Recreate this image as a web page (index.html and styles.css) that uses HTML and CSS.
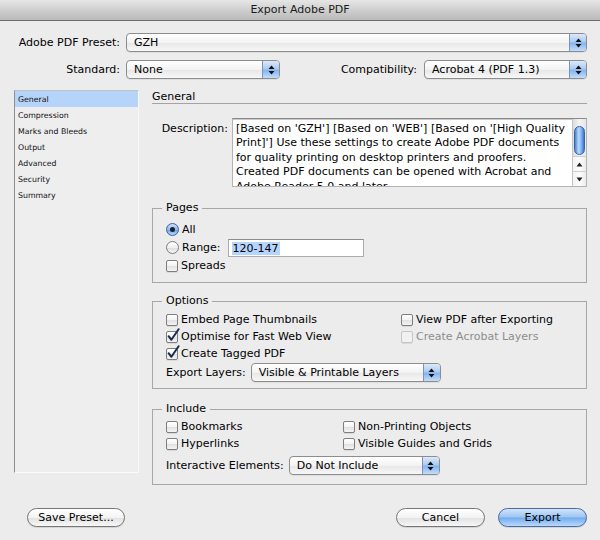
FILE: index.html
```html
<!DOCTYPE html>
<html>
<head>
<meta charset="utf-8">
<title>Export Adobe PDF</title>
<link rel="stylesheet" href="styles.css">
</head>
<body>
<div class="window">
  <div class="titlebar">Export Adobe PDF</div>

  <div class="top">
    <div class="row">
      <span class="lbl">Adobe PDF Preset:</span>
      <div class="popup w-preset"><span class="val">GZH</span><span class="cap"><svg width="9" height="12" viewBox="0 0 9 12"><polygon points="1.5,5 4.5,1.5 7.5,5" fill="#111"/><polygon points="1.5,7 4.5,10.5 7.5,7" fill="#111"/></svg></span></div>
    </div>
    <div class="row row2">
      <span class="lbl">Standard:</span>
      <div class="popup w-std"><span class="val">None</span><span class="cap"><svg width="9" height="12" viewBox="0 0 9 12"><polygon points="1.5,5 4.5,1.5 7.5,5" fill="#111"/><polygon points="1.5,7 4.5,10.5 7.5,7" fill="#111"/></svg></span></div>
      <span class="lbl-compat">Compatibility:</span>
      <div class="popup w-compat"><span class="val">Acrobat 4 (PDF 1.3)</span><span class="cap"><svg width="9" height="12" viewBox="0 0 9 12"><polygon points="1.5,5 4.5,1.5 7.5,5" fill="#111"/><polygon points="1.5,7 4.5,10.5 7.5,7" fill="#111"/></svg></span></div>
    </div>
  </div>

  <div class="main">
    <ul class="nav">
      <li class="sel">General</li>
      <li>Compression</li>
      <li>Marks and Bleeds</li>
      <li>Output</li>
      <li>Advanced</li>
      <li>Security</li>
      <li>Summary</li>
    </ul>

    <div class="panel">
      <div class="phead">General</div>

      <div class="desc-row">
        <span class="desc-lbl">Description:</span>
        <div class="desc-box">
          <div class="desc-text">[Based on 'GZH'] [Based on 'WEB'] [Based on '[High Quality<br>Print]'] Use these settings to create Adobe PDF documents<br>for quality printing on desktop printers and proofers.<br>Created PDF documents can be opened with Acrobat and<br>Adobe Reader 5.0 and later.</div>
          <div class="scroll">
            <div class="thumb"></div>
            <div class="track"></div>
            <div class="arrow"><svg width="7" height="5" viewBox="0 0 7 5"><polygon points="0.5,4.5 3.5,0.5 6.5,4.5" fill="#222"/></svg></div>
            <div class="arrow arrow-down"><svg width="7" height="5" viewBox="0 0 7 5"><polygon points="0.5,0.5 3.5,4.5 6.5,0.5" fill="#222"/></svg></div>
          </div>
        </div>
      </div>

      <fieldset class="grp pages">
        <legend>Pages</legend>
        <div class="line"><span class="radio on"><span class="dot"></span></span><span>All</span></div>
        <div class="line range-line"><span class="radio"></span><span>Range:</span><span class="field"><span class="hl">120-147</span></span></div>
        <div class="line"><span class="box"></span><span>Spreads</span></div>
      </fieldset>

      <fieldset class="grp options">
        <legend>Options</legend>
        <div class="cols cols-opt">
          <div class="line"><span class="box"></span><span>Embed Page Thumbnails</span></div>
          <div class="line"><span class="box"></span><span>View PDF after Exporting</span></div>
          <div class="line"><span class="box"><svg class="tick" width="14" height="15" viewBox="0 0 14 15"><path d="M2.6 8.2 L5.4 11.8 L12.6 1.2" fill="none" stroke="#1c2b4e" stroke-width="2" stroke-linecap="round" stroke-linejoin="round"/></svg></span><span>Optimise for Fast Web View</span></div>
          <div class="line dis"><span class="box"></span><span>Create Acrobat Layers</span></div>
          <div class="line"><span class="box"><svg class="tick" width="14" height="15" viewBox="0 0 14 15"><path d="M2.6 8.2 L5.4 11.8 L12.6 1.2" fill="none" stroke="#1c2b4e" stroke-width="2" stroke-linecap="round" stroke-linejoin="round"/></svg></span><span>Create Tagged PDF</span></div>
        </div>
        <div class="sel-line">
          <span>Export Layers:</span>
          <div class="popup w-layers"><span class="val">Visible &amp; Printable Layers</span><span class="cap"><svg width="9" height="12" viewBox="0 0 9 12"><polygon points="1.5,5 4.5,1.5 7.5,5" fill="#111"/><polygon points="1.5,7 4.5,10.5 7.5,7" fill="#111"/></svg></span></div>
        </div>
      </fieldset>

      <fieldset class="grp include">
        <legend>Include</legend>
        <div class="cols cols-inc">
          <div class="line"><span class="box"></span><span>Bookmarks</span></div>
          <div class="line"><span class="box"></span><span>Non-Printing Objects</span></div>
          <div class="line"><span class="box"></span><span>Hyperlinks</span></div>
          <div class="line"><span class="box"></span><span>Visible Guides and Grids</span></div>
        </div>
        <div class="sel-line sel-inc">
          <span>Interactive Elements:</span>
          <div class="popup w-inter"><span class="val">Do Not Include</span><span class="cap"><svg width="9" height="12" viewBox="0 0 9 12"><polygon points="1.5,5 4.5,1.5 7.5,5" fill="#111"/><polygon points="1.5,7 4.5,10.5 7.5,7" fill="#111"/></svg></span></div>
        </div>
      </fieldset>
    </div>
  </div>

  <div class="footer">
    <button class="btn w-save">Save Preset...</button>
    <span class="spacer"></span>
    <button class="btn w-btn">Cancel</button>
    <button class="btn w-btn primary">Export</button>
  </div>
</div>
</body>
</html>
```

FILE: styles.css
```css
html, body {
  margin: 0;
  padding: 0;
}
body {
  width: 600px;
  height: 540px;
  overflow: hidden;
  background: #ececec;
  font-family: "DejaVu Sans", sans-serif;
  font-size: 11px;
  color: #000;
}
.window {
  width: 600px;
  height: 540px;
  background: #ececec;
}
.titlebar {
  height: 20px;
  line-height: 20px;
  text-align: center;
  border-bottom: 1px solid #6c6c6c;
  background: linear-gradient(#e6e6e6, #cfcfcf 50%, #b9b9b9);
  color: #1a1a1a;
}

/* top rows */
.top {
  padding: 12px 13px 0 0;
}
.row {
  display: flex;
  align-items: center;
  height: 19px;
}
.row2 {
  margin-top: 8px;
}
.lbl {
  width: 120px;
  margin-right: 6px;
  text-align: right;
  white-space: nowrap;
}
.lbl-compat {
  margin-left: auto;
  margin-right: 7px;
  white-space: nowrap;
}

/* popup buttons */
.popup {
  display: flex;
  box-sizing: border-box;
  height: 19px;
  border: 1px solid #8d8d8d;
  border-radius: 4px;
  background: linear-gradient(#ffffff, #f3f3f3 50%, #e7e7e7 52%, #f7f7f7);
  box-shadow: 0 1px 0 rgba(0, 0, 0, 0.06);
  overflow: hidden;
}
.val {
  flex: 1;
  padding-left: 7px;
  line-height: 17px;
  white-space: nowrap;
}
.cap {
  width: 16px;
  border-left: 1px solid #7d92b8;
  background: linear-gradient(#dbe9fb, #a9c9f2 48%, #82b2ef 52%, #c2ddfb);
  display: flex;
  align-items: center;
  justify-content: center;
}
.w-preset { width: 461px; }
.w-std { width: 154px; }
.w-compat { width: 163px; }
.w-layers { width: 190px; }
.w-inter { width: 151px; }

/* main area */
.main {
  display: flex;
  align-items: flex-start;
  margin-top: 11px;
  padding: 0 13px 0 14px;
}
.nav {
  list-style: none;
  margin: 0 13px 0 0;
  padding: 0;
  box-sizing: border-box;
  width: 125px;
  height: 383px;
  border: 1px solid;
  border-color: #c2c2c2 #f7f7f7 #fbfbfb #8f8f8f;
  background: #eeeeee;
  font-size: 7.8px;
}
.nav li {
  height: 16px;
  line-height: 17px;
  padding-left: 3px;
  white-space: nowrap;
  color: #111;
}
.nav li.sel {
  background: #b6d4fa;
}
.panel {
  width: 435px;
}
.phead {
  height: 13px;
  line-height: 13px;
  border-bottom: 1px solid #a3a3a3;
}

/* description */
.desc-row {
  display: flex;
  margin-top: 14px;
}
.desc-lbl {
  width: 76px;
  margin-right: 4px;
  text-align: right;
  padding-top: 4px;
  line-height: 14.4px;
}
.desc-box {
  display: flex;
  box-sizing: border-box;
  width: 355px;
  height: 69px;
  background: #fff;
  border: 1px solid #b3b3b3;
  border-top-color: #8a8a8a;
  box-shadow: inset 0 1px 0 #c9c9c9;
}
.desc-text {
  flex: 1;
  padding: 3px 0 0 3px;
  line-height: 14.4px;
  white-space: nowrap;
  overflow: hidden;
}
.scroll {
  width: 13px;
  display: flex;
  flex-direction: column;
  border-left: 1px solid #c4c4c4;
  background: linear-gradient(90deg, #dcdcdc, #f4f4f4 50%, #e6e6e6);
}
.thumb {
  box-sizing: border-box;
  margin: 7px 0 0 1px;
  width: 11px;
  height: 29px;
  border-radius: 6px;
  border: 1px solid #3763a8;
  background: linear-gradient(90deg, #4a82d6, #b9d9fa 40%, #7fb3f0 70%, #3a74c9);
}
.track {
  flex: 1;
}
.arrow {
  height: 14px;
  display: flex;
  align-items: center;
  justify-content: center;
  border-top: 1px solid #cfcfcf;
  background: linear-gradient(90deg, #f3f3f3, #fdfdfd 50%, #ececec);
}

/* group boxes */
.grp {
  margin: 0;
  padding: 0 0 0 13px;
  border: 1px solid #a7a7a7;
  min-width: 0;
}
.grp legend {
  padding: 0 4px;
  margin-left: -4px;
  line-height: 14px;
}
.pages {
  margin-top: 14px;
  padding-top: 6px;
  padding-bottom: 8px;
}
.options {
  margin-top: 11px;
  padding-top: 3px;
  padding-bottom: 6px;
}
.include {
  margin-top: 13px;
  padding-top: 2px;
  padding-bottom: 9px;
}
.line {
  display: flex;
  align-items: center;
  height: 17px;
  white-space: nowrap;
}
.line > span + span {
  margin-left: 3px;
}
.range-line {
  height: 19px;
}
.range-line .field {
  margin-left: 7px;
}
.cols {
  display: grid;
}
.cols-opt {
  grid-template-columns: 235px auto;
}
.cols-inc {
  grid-template-columns: 177px auto;
}
.dis {
  color: #8d8d8d;
}
.dis .box {
  border-color: #c6c6c6;
  background: #f1f1f1;
}

.box {
  position: relative;
  box-sizing: border-box;
  width: 12px;
  height: 12px;
  border: 1px solid #7e7e7e;
  border-radius: 2px;
  background: linear-gradient(#ffffff, #f2f2f2 50%, #e2e2e2 55%, #f4f4f4);
  box-shadow: 0 1px 0 rgba(0, 0, 0, 0.08);
  flex: none;
}
.tick {
  position: absolute;
  left: -1px;
  top: -4px;
  overflow: visible;
}
.radio {
  box-sizing: border-box;
  width: 13px;
  height: 13px;
  border-radius: 50%;
  border: 1px solid #7b7b7b;
  background: linear-gradient(#ffffff, #f0f0f0 50%, #dedede 55%, #f6f6f6);
  display: flex;
  align-items: center;
  justify-content: center;
  flex: none;
}
.radio.on {
  border-color: #3d5f9c;
  background: linear-gradient(#cfe2fb, #8fbaf0 50%, #6ea5ec 55%, #b6d6fb);
}
.radio .dot {
  width: 5px;
  height: 5px;
  border-radius: 50%;
  background: #1b1f2e;
}
.field {
  box-sizing: border-box;
  width: 136px;
  height: 18px;
  padding: 1px 0 0 3px;
  background: #fff;
  border: 1px solid #acacac;
  border-top-color: #8c8c8c;
  line-height: 15px;
}
.hl {
  background: #b5d5ff;
  padding: 0 1px;
}
.sel-line {
  display: flex;
  align-items: center;
  height: 19px;
  margin-top: 1px;
  white-space: nowrap;
}
.sel-line .popup {
  margin-left: 5px;
}
.sel-inc {
  margin-top: 4px;
}

/* footer */
.footer {
  display: flex;
  margin-top: 23px;
  padding: 0 13px 0 27px;
}
.spacer {
  flex: 1;
}
.btn {
  box-sizing: border-box;
  height: 19px;
  padding: 0;
  font-family: "DejaVu Sans", sans-serif;
  font-size: 11px;
  color: #000;
  border: 1px solid #767676;
  border-radius: 10px;
  background: linear-gradient(#ffffff, #f3f3f3 50%, #e3e3e3 55%, #f7f7f7);
  box-shadow: 0 1px 0 rgba(0, 0, 0, 0.1);
  line-height: 17px;
}
.w-save { width: 98px; }
.w-btn { width: 89px; }
.w-btn + .w-btn { margin-left: 13px; }
.primary {
  border-color: #4a6aa3;
  background: linear-gradient(#d2e5fb, #9cc4f3 48%, #74abee 52%, #b8d9fb);
}
```
